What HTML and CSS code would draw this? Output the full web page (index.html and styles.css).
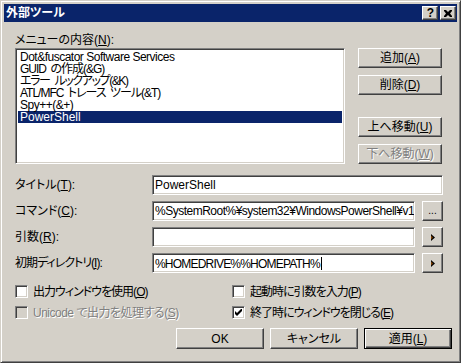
FILE: index.html
```html
<!DOCTYPE html>
<html lang="ja">
<head>
<meta charset="UTF-8">
<title>外部ツール</title>
<link rel="stylesheet" href="styles.css">
</head>
<body>
<div class="window">
  <div class="caption">
    <span class="caption-text">外部ツール</span>
    <span class="caption-btn help">?</span>
    <span class="caption-btn close">
      <svg width="8" height="7" viewBox="0 0 8 7"><path d="M0 0h2l2 2 2-2h2v1l-2 2.5 2 2.5v1h-2l-2-2-2 2h-2v-1l2-2.5-2-2.5z" fill="#000"/></svg>
    </span>
  </div>
  <div class="client">
    <div class="label menu-label">メニューの内容(<u>N</u>):</div>
    <div class="list-row">
      <div class="listbox">
        <div class="item narrow">Dot&amp;fuscator Software Services</div>
        <div class="item narrower">GUID の作成(&amp;G)</div>
        <div class="item narrowest">エラー ルックアップ(&amp;K)</div>
        <div class="item narrower">ATL/MFC トレース ツール(&amp;T)</div>
        <div class="item narrow">Spy++(&amp;+)</div>
        <div class="item selected">PowerShell</div>
      </div>
      <div class="side-buttons">
        <div class="button"><span>追加(<u>A</u>)</span></div>
        <div class="button"><span>削除(<u>D</u>)</span></div>
        <div class="button move-up"><span>上へ移動(<u>U</u>)</span></div>
        <div class="button disabled"><span>下へ移動(<u>W</u>)</span></div>
      </div>
    </div>
    <div class="fields">
      <div class="label">タイトル(<u>T</u>):</div>
      <div class="edit wide">PowerShell</div>

      <div class="label">コマンド(<u>C</u>):</div>
      <div class="edit narrow">%SystemRoot%¥system32¥WindowsPowerShell¥v1.0¥powershell.exe</div>
      <div class="button small dots">...</div>

      <div class="label">引数(<u>R</u>):</div>
      <div class="edit"></div>
      <div class="button small"><svg width="4" height="7" viewBox="0 0 4 7"><path d="M0 0l4 3.5-4 3.5z" fill="#000"/><path d="M0 1.5l2 2-2 2z" fill="#804000"/></svg></div>

      <div class="label narrower">初期ディレクトリ(<u>I</u>):</div>
      <div class="edit squeezed">%HOMEDRIVE%%HOMEPATH%<span class="caret"></span></div>
      <div class="button small"><svg width="4" height="7" viewBox="0 0 4 7"><path d="M0 0l4 3.5-4 3.5z" fill="#000"/><path d="M0 1.5l2 2-2 2z" fill="#804000"/></svg></div>
    </div>
    <div class="checks">
      <div class="check narrower"><span class="box"></span><span>出力ウィンドウを使用(<u>O</u>)</span></div>
      <div class="check narrower"><span class="box"></span><span>起動時に引数を入力(<u>P</u>)</span></div>
      <div class="check disabled narrow"><span class="box"></span><span>Unicode で出力を処理する(<u>S</u>)</span></div>
      <div class="check narrower"><span class="box"><svg width="7" height="7" viewBox="0 0 7 7"><path d="M0 2v3l2 2 5-5v-3l-5 5z" fill="#000"/></svg></span><span>終了時にウィンドウを閉じる(<u>E</u>)</span></div>
    </div>
    <div class="dialog-buttons">
      <div class="button">OK</div>
      <div class="button">キャンセル</div>
      <div class="button default"><span>適用(<u>L</u>)</span></div>
    </div>
  </div>
</div>
</body>
</html>
```

FILE: styles.css
```css
* {
  box-sizing: border-box;
}

body {
  margin: 0;
  background: #d4d0c8;
  font-family: "Liberation Sans", "Noto Sans CJK JP", sans-serif;
  font-size: 12px;
  line-height: 12px;
  color: #000;
  font-feature-settings: "palt";
  overflow: hidden;
}

u {
  text-underline-offset: 1px;
}

/* the dialog font is narrower than ours, squeeze a few texts */
.narrow {
  letter-spacing: -0.5px;
}

.narrower {
  letter-spacing: -1px;
  word-spacing: 2px;
}

.narrowest {
  letter-spacing: -1.4px;
  word-spacing: 3px;
}

.squeezed {
  letter-spacing: -0.8px;
}

.window {
  width: 461px;
  height: 363px;
  border: 1px solid;
  border-color: #d4d0c8 #404040 #404040 #d4d0c8;
  box-shadow: inset 1px 1px #fff, inset -1px -1px #808080;
  padding: 3px;
}

/* title bar */
.caption {
  height: 18px;
  background: #0a246a;
  display: flex;
  align-items: center;
  gap: 2px;
  padding: 0 1px 0 2px;
}

.caption-text {
  flex: 1;
  color: #fff;
  font-weight: bold;
}

.caption-btn {
  width: 16px;
  height: 14px;
  background: #d4d0c8;
  border: 1px solid;
  border-color: #fff #404040 #404040 #fff;
  box-shadow: inset -1px -1px #808080;
  display: flex;
  align-items: center;
  justify-content: center;
  font-weight: bold;
  font-size: 12px;
}

.caption-btn.help {
  padding-left: 1px;
}

/* client area */
.client {
  padding: 12px 0 0 11px;
}

.label {
  height: 12px;
  white-space: nowrap;
}

.menu-label {
  margin-bottom: 2px;
}

.list-row {
  display: flex;
  gap: 13px;
}

.listbox {
  width: 330px;
  height: 116px;
  background: #fff;
  border: 1px solid;
  border-color: #808080 #fff #fff #808080;
  box-shadow: inset 1px 1px #404040, inset -1px -1px #d4d0c8;
  padding: 2px;
}

.item {
  height: 12px;
  padding-left: 2px;
  white-space: nowrap;
}

.item.selected {
  background: #0a246a;
  color: #fff;
}

.side-buttons {
  display: flex;
  flex-direction: column;
  gap: 7px;
  width: 84px;
}

.side-buttons .button {
  height: 20px;
}

.side-buttons .move-up {
  margin-top: 15px;
}

.button {
  background: #d4d0c8;
  border: 1px solid;
  border-color: #fff #404040 #404040 #fff;
  box-shadow: inset -1px -1px #808080;
  display: flex;
  align-items: center;
  justify-content: center;
  white-space: nowrap;
}

.button.disabled {
  color: #808080;
  text-shadow: 1px 1px #fff;
}

.button.default {
  border: 1px solid #000;
  box-shadow: inset 1px 1px #fff, inset -1px -1px #404040, inset -2px -2px #808080;
}

/* text fields */
.fields {
  display: grid;
  grid-template-columns: 137px 263px 7px 21px;
  grid-auto-rows: 20px;
  row-gap: 6px;
  margin-top: 11px;
  align-items: center;
}

.fields .label {
  grid-column: 1;
}

.fields .button {
  grid-column: 4;
}

.edit {
  grid-column: 2;
  height: 20px;
  background: #fff;
  border: 1px solid;
  border-color: #808080 #fff #fff #808080;
  box-shadow: inset 1px 1px #404040, inset -1px -1px #d4d0c8;
  padding: 3px 2px 0 2px;
  white-space: nowrap;
  overflow: hidden;
}

.edit.wide {
  grid-column: 2 / 5;
}

.caret {
  display: inline-block;
  width: 1px;
  height: 13px;
  margin-left: 1px;
  background: #000;
  vertical-align: -2px;
}

.button.small {
  height: 20px;
}

.button.dots {
  align-items: flex-end;
  padding-bottom: 4px;
  font-size: 10px;
  line-height: 10px;
}

/* check boxes */
.checks {
  display: grid;
  grid-template-columns: 217px auto;
  row-gap: 8px;
  margin-top: 12px;
}

.check {
  display: flex;
  align-items: center;
  gap: 5px;
  height: 13px;
  white-space: nowrap;
}

.box {
  width: 13px;
  height: 13px;
  background: #fff;
  border: 1px solid;
  border-color: #808080 #fff #fff #808080;
  box-shadow: inset 1px 1px #404040, inset -1px -1px #d4d0c8;
  display: flex;
  align-items: center;
  justify-content: center;
}

.check.disabled {
  color: #808080;
  text-shadow: 1px 1px #fff;
}

.check.disabled .box {
  background: #d4d0c8;
}

/* bottom buttons */
.dialog-buttons {
  display: flex;
  justify-content: flex-end;
  gap: 6px;
  margin: 9px 5px 0 0;
}

.dialog-buttons .button {
  width: 88px;
  height: 21px;
}
```
